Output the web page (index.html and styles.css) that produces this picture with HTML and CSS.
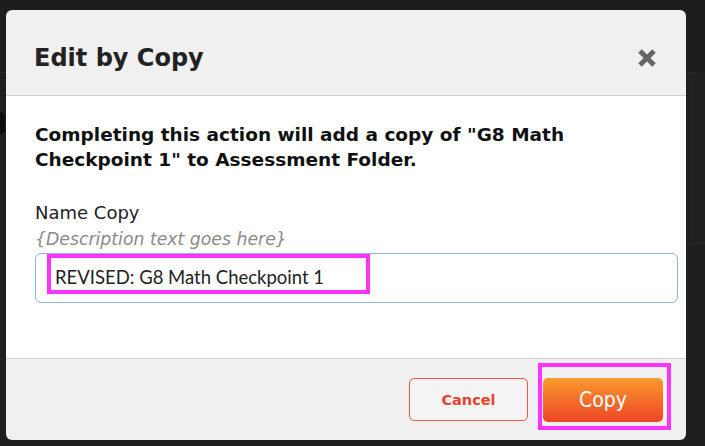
FILE: index.html
```html
<!DOCTYPE html>
<html>
<head>
<meta charset="utf-8">
<link rel="stylesheet" href="styles.css">
</head>
<body>
<div class="backdrop">
  <div class="bg-band"></div>
  <div class="bg-side"></div>
  <div class="bg-mark"></div>
</div>
<div class="dialog">
  <div class="dialog-header">
    <h1 class="dialog-title">Edit by Copy</h1>
    <button class="close-btn" aria-label="Close">
      <svg width="20" height="20" viewBox="0 0 20 20"><path d="M3 3 L17 17 M17 3 L3 17" stroke="#666" stroke-width="5" stroke-linecap="butt"/></svg>
    </button>
  </div>
  <div class="dialog-body">
    <p class="lead">Completing this action will add a copy of "G8 Math Checkpoint 1" to Assessment Folder.</p>
    <label class="field-label">Name Copy</label>
    <div class="field-desc">{Description text goes here}</div>
    <div class="input-box">
      <span class="input-text highlight">REVISED: G8 Math Checkpoint 1</span>
    </div>
  </div>
  <div class="dialog-footer">
    <button class="btn btn-cancel">Cancel</button>
    <div class="highlight-btn">
      <button class="btn btn-copy">Copy</button>
    </div>
  </div>
</div>
</body>
</html>
```

FILE: styles.css
```css
* { box-sizing: border-box; }
html, body { margin: 0; padding: 0; }
body {
  width: 705px;
  height: 446px;
  background: #1f1f1f;
  position: relative;
  overflow: hidden;
  font-family: "DejaVu Sans", Verdana, sans-serif;
}
.backdrop { position: absolute; inset: 0; }
.bg-band {
  position: absolute; left: 0; top: 0; right: 0; height: 73px;
  background: #1d1d1d;
  border-bottom: 1px solid #292929;
}
.bg-side {
  position: absolute; left: 690px; top: 74px; width: 15px; height: 170px;
  background: #212121;
  border-bottom: 1px solid #292929;
}
.bg-mark {
  position: absolute; left: 0; top: 112px; width: 5px; height: 22px;
  border-radius: 0 6px 6px 0;
  background: #0d0d0d;
}
.dialog {
  position: absolute;
  left: 6px; top: 10px;
  width: 680px; height: 430px;
  background: #f0f0f0;
  border-radius: 6px;
  display: flex;
  flex-direction: column;
  overflow: hidden;
}
.dialog-header {
  height: 86px;
  border-bottom: 1px solid #cfcfcf;
  display: flex;
  align-items: center;
  justify-content: space-between;
  padding: 10px 29px 0 28px;
}
.dialog-title {
  margin: 0;
  font-family: "DejaVu Sans", sans-serif;
  font-weight: bold;
  font-size: 24px;
  color: #222;
}
.close-btn {
  background: none; border: 0; padding: 0; margin: 0;
  width: 20px; height: 20px;
  display: block;
}
.close-btn svg { display: block; }
.dialog-body {
  background: #fff;
  height: 263px;
  border-bottom: 1px solid #cfcfcf;
  padding: 26px 8px 0 29px;
}
.lead {
  margin: 0 0 30px 0;
  font-family: "DejaVu Sans", sans-serif;
  font-weight: bold;
  font-size: 18.5px;
  line-height: 25px;
  color: #111;
  width: 620px;
}
.field-label {
  display: block;
  font-family: "DejaVu Sans", sans-serif;
  font-size: 18px;
  line-height: 22px;
  color: #222;
}
.field-desc {
  font-family: "DejaVu Sans", sans-serif;
  font-style: italic;
  font-size: 17.3px;
  line-height: 22px;
  color: #8a8a8a;
  margin-top: 4px;
}
.input-box {
  margin-top: 3px;
  width: 643px;
  height: 50px;
  border: 1px solid #8fb6d4;
  border-radius: 6px;
  padding: 0 0 0 11px;
  display: flex;
  align-items: flex-start;
}
.input-text {
  font-family: Lato, sans-serif;
  font-size: 18.5px;
  color: #222;
}
.highlight {
  display: block;
  width: 323px;
  height: 40px;
  border: 4px solid #ff33ff;
  padding: 7px 0 0 4px;
  line-height: 24px;
}
.dialog-footer {
  flex: 1;
  display: flex;
  align-items: flex-start;
  justify-content: flex-end;
  padding: 4px 15px 0 0;
  gap: 10px;
}
.btn {
  font-family: "DejaVu Sans", sans-serif;
  border-radius: 5px;
  cursor: pointer;
}
.btn-cancel {
  margin-top: 15px;
  width: 119px; height: 43px;
  background: #f4f4f4;
  border: 1px solid #ec5a45;
  color: #e8432e;
  font-weight: bold;
  font-size: 14.5px;
}
.highlight-btn {
  width: 133px; height: 67px;
  border: 4px solid #ff33ff;
  padding: 11px 0 0 1px;
}
.btn-copy {
  display: block;
  width: 120px; height: 44px;
  border: 0;
  background: linear-gradient(#f99a2e, #ef4526);
  color: #fff;
  font-size: 21px;
  font-family: "DejaVu Sans Condensed", "DejaVu Sans", sans-serif;
}
```
